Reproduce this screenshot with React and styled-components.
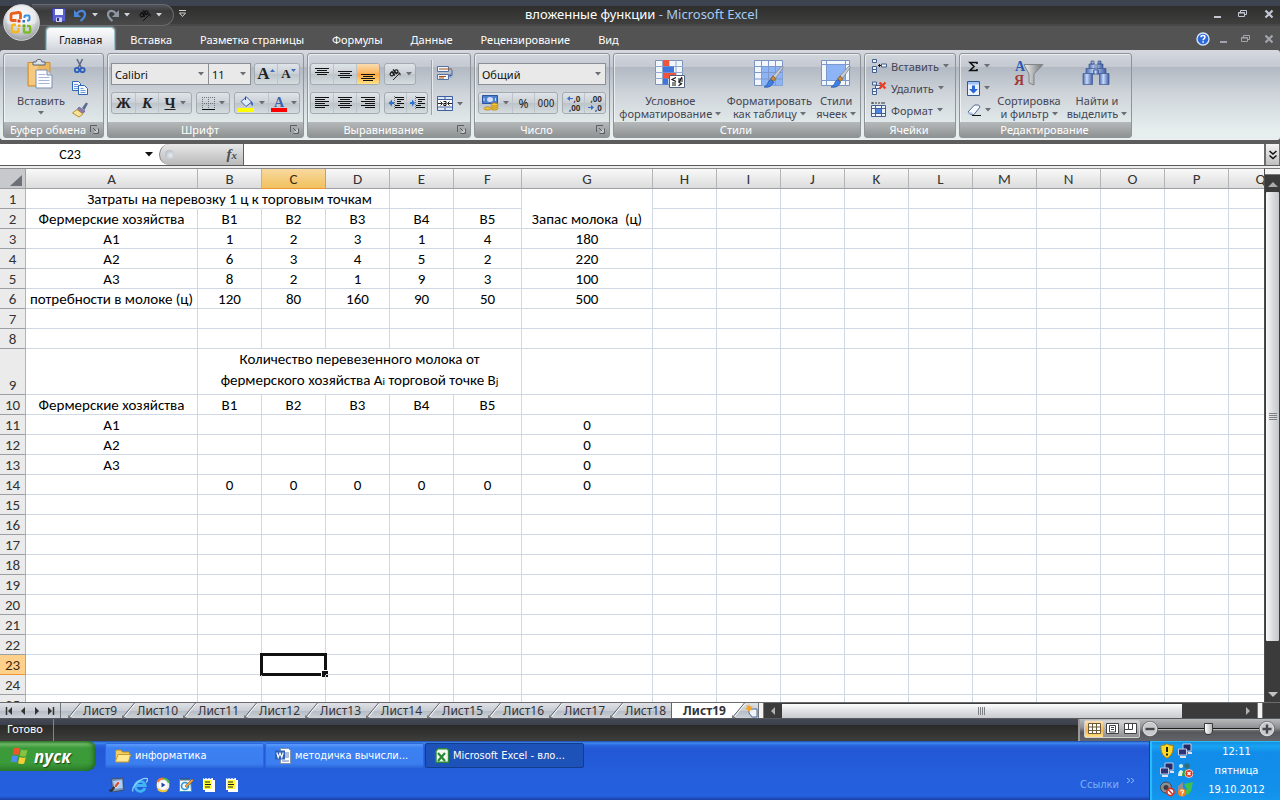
import React from "react";
import styled, { createGlobalStyle, css } from "styled-components";

const UI = '"Noto Sans", "Open Sans", sans-serif';
const CELL = 'Carlito, Lato, "Open Sans", sans-serif';
const TAHOMA = '"DejaVu Sans Condensed", "DejaVu Sans", sans-serif';

const Global = createGlobalStyle`
  * { box-sizing: border-box; }
  html, body { margin: 0; height: 100%; overflow: hidden; }
  body { font-family: ${UI}; font-size: 11px; color: #3b3b4b; }
  button, input, select { font: inherit; color: inherit; margin: 0; padding: 0; border: 0; background: none; border-radius: 0; outline: none; }
  svg { display: block; flex: none; }
  #root { height: 100%; }
`;

/* ---------- window ---------- */

const Window = styled.div`
  display: flex;
  flex-direction: column;
  height: 100vh;
  position: relative;
  background: #535353;
`;

const TitleBar = styled.header`
  flex: none;
  height: 27px;
  display: grid;
  grid-template-columns: 200px 1fr 200px;
  background: linear-gradient(#3e4350 0 6px, #2e2e2c 6px, #3f3f3f 24px, #484848 24px 26px, #535353 26px);
`;

const QuickAccess = styled.div`
  margin: 2px 0 0 32px;
  width: 142px;
  height: 22px;
  padding-left: 20px;
  display: flex;
  align-items: center;
  gap: 8px;
  border: 1px solid #66686c;
  border-left: 0;
  border-radius: 0 11px 11px 0;
  background: linear-gradient(#52545c, #3a3a3a 30%, #4a4a4a);
`;

const QuickRow = styled.div`
  display: flex;
  align-items: center;
`;

const Title = styled.h1`
  margin: 3px 0 0 3px;
  font-size: 13px;
  line-height: 22px;
  font-weight: 400;
  text-align: center;
  white-space: nowrap;
  color: #fff;
  span { color: #a6cbf5; }
`;

const WinButtons = styled.div`
  display: flex;
  justify-content: flex-end;
  align-items: center;
  gap: ${(p) => p.$gap || 14}px;
  padding-right: 6px;
  opacity: ${(p) => (p.$dim ? 0.7 : 1)};
`;

const PlainButton = styled.button`
  display: flex;
  align-items: center;
  gap: ${(p) => p.$gap || 0}px;
`;

const HelpButton = styled(PlainButton)`
  margin-right: 6px;
`;

const Orb = styled.button`
  position: absolute;
  left: 3px;
  top: 4px;
  width: 37px;
  height: 37px;
  z-index: 2;
`;

const TabBar = styled.nav`
  flex: none;
  height: 23px;
  padding: 1px 0 0 47px;
  display: flex;
  align-items: stretch;
  gap: 4px;
  background: #535353;
`;

const RibbonTab = styled.button`
  padding: 2px 12px 0;
  line-height: 20px;
  color: #fff;
  white-space: nowrap;
  ${(p) => p.$active && css`
    color: #111;
    border-radius: 3px 3px 0 0;
    background: linear-gradient(#fdfdfd, #e4e7ec 60%, #d2d6dc);
    box-shadow: 0 0 2px 1px #b9eaf0;
  `}
`;

const Spacer = styled.div`
  flex: 1;
`;

/* ---------- ribbon ---------- */

const Ribbon = styled.section`
  flex: none;
  height: 90px;
  padding: 3px 3px 1px;
  display: flex;
  gap: 3px;
  position: relative;
  border-radius: 3px;
  border-bottom: 1px solid #efefef;
  background: linear-gradient(#d5d9df, #c4c8d1 17px, #b3b9c3 17px, #cfd5da 45px, #e6eeee 80px);
`;

const Group = styled.fieldset`
  margin: 0;
  padding: 0;
  min-width: 0;
  flex: none;
  width: ${(p) => p.$w}px;
  display: flex;
  flex-direction: column;
  border: 1px solid #8f9498;
  border-radius: 3px;
  box-shadow: inset 1px 1px 0 rgba(255, 255, 255, 0.6);
`;

const GroupBody = styled.div`
  flex: 1;
  min-height: 0;
  display: flex;
  padding: ${(p) => p.$pad || "0 3px"};
  gap: ${(p) => p.$gap || 0}px;
`;

const GroupFooter = styled.div`
  height: 15px;
  display: flex;
  align-items: center;
  padding: 0 4px 0 2px;
  color: #fff;
  line-height: 15px;
  white-space: nowrap;
  background: linear-gradient(#b5b9ba, #8f9292);
  span { flex: 1; text-align: center; }
`;

const Stack = styled.div`
  display: flex;
  flex-direction: column;
  gap: ${(p) => p.$gap || 0}px;
  padding-top: ${(p) => p.$top || 0}px;
`;

const Row = styled.div`
  display: flex;
  align-items: center;
  gap: ${(p) => p.$gap || 0}px;
`;

const ButtonBox = styled.div`
  display: flex;
  height: 22px;
  border: 1px solid #a4abb1;
  border-radius: 3px;
  overflow: hidden;
  background: linear-gradient(#dfe4e8, #c9cfd5 50%, #bcc4ca 50%, #d5dde0);
`;

const ToolButton = styled.button`
  width: ${(p) => p.$w}px;
  display: flex;
  align-items: center;
  justify-content: center;
  gap: ${(p) => (p.$tight ? 0 : 4)}px;
  color: #222;
  font-size: 12px;
  ${(p) => p.$on && css`background: linear-gradient(#fbdcb0, #fbb763 45%, #ffa63f 50%, #ffe387);`}
  & + & { border-left: 1px solid #bcc4c9; }
`;

const Letter = styled.span`
  font-family: "Liberation Serif", serif;
  font-weight: 700;
  font-size: ${(p) => p.$size || 15}px;
  line-height: 18px;
  font-style: ${(p) => (p.$italic ? "italic" : "normal")};
  text-decoration: ${(p) => (p.$underline ? "underline" : "none")};
`;

const Narrow = styled.span`
  font-family: ${TAHOMA};
  font-size: 10px;
`;

const DecimalText = styled.span`
  display: flex;
  flex-direction: column;
  align-items: flex-end;
  font-size: 8px;
  line-height: 9px;
  font-weight: 700;
  color: #333;
  span { display: flex; align-items: center; gap: 1px; }
`;

const Combo = styled.label`
  position: relative;
  display: block;
  width: ${(p) => p.$w}px;
  height: 22px;
  & + & { margin-left: -1px; }
  select {
    appearance: none;
    width: 100%;
    height: 100%;
    padding-left: 3px;
    border: 1px solid #8b8f93;
    background: #e9e9e9;
    color: #111;
  }
  svg { position: absolute; right: 5px; top: 9px; }
`;

const Divider = styled.div`
  width: 2px;
  height: 55px;
  margin: 6px 4px 0 3px;
  border-left: 1px solid #9ba1a7;
  border-right: 1px solid #e6eaec;
`;

const BigButton = styled.button`
  width: ${(p) => p.$w}px;
  display: flex;
  flex-direction: column;
  align-items: center;
  padding-top: 5px;
  line-height: 13px;
  white-space: nowrap;
  color: #454554;
  svg.pic { margin-bottom: 5px; }
`;

const BigLine = styled.span`
  display: flex;
  align-items: center;
  gap: 3px;
  min-height: 12px;
`;

const SmallButton = styled.button`
  height: 22px;
  display: flex;
  align-items: center;
  gap: 4px;
  white-space: nowrap;
  color: #454554;
`;

/* ---------- formula bar ---------- */

const FormulaBar = styled.section`
  flex: none;
  display: flex;
  height: 26px;
  border-top: 4px solid #5c5c5c;
  border-bottom: 1px solid #5a5a5a;
  background: #fff;
  font-family: ${CELL};
  color: #000;
`;

const NameBox = styled.label`
  width: 159px;
  display: flex;
  align-items: center;
  input { width: 140px; text-align: center; font-size: 14px; line-height: 20px; }
`;

const FxZone = styled.div`
  width: 85px;
  display: flex;
  align-items: center;
  justify-content: space-between;
  padding: 0 6px 0 5px;
  border-right: 1px solid #606060;
  border-left: 1px solid #808080;
  border-radius: 11px 0 0 11px;
  background: linear-gradient(#e8e8e8, #b9b9b9);
`;

const Dimple = styled.i`
  width: 9px;
  height: 9px;
  border-radius: 50%;
  background: radial-gradient(circle at 60% 60%, #e9edf2, #a3abb8);
`;

const FxButton = styled.button`
  font-family: "Liberation Serif", serif;
  font-style: italic;
  font-weight: 700;
  font-size: 15px;
  line-height: 18px;
  color: #4b4f55;
  small { font-size: 11px; }
`;

const FormulaInput = styled.input`
  flex: 1;
  min-width: 0;
`;

const ExpandButton = styled.button`
  width: 16px;
  display: flex;
  align-items: center;
  justify-content: center;
  border: 1px solid #6c6c6c;
  border-width: 0 1px 0 2px;
  background: linear-gradient(#f4f4f4, #bfbfbf);
`;

/* ---------- grid ---------- */

const Work = styled.main`
  flex: 1;
  min-height: 0;
  display: flex;
  border-top: 2px solid #eeeeee;
  background: #fff;
`;

const SheetView = styled.div`
  flex: 1;
  min-width: 0;
  overflow: hidden;
  border-top: 1px solid #8d8d8d;
  border-right: 1px solid #4c4c4c;
`;

const Sheet = styled.table`
  table-layout: fixed;
  width: 1293px;
  border-collapse: separate;
  border-spacing: 0;
  font-family: ${CELL};
  font-size: 15px;
  line-height: 17px;
  color: #000;
`;

const HeadCell = styled.th`
  height: 20px;
  padding: 2px 0 0;
  font-weight: 400;
  color: #333;
  vertical-align: bottom;
  border-right: 1px solid #b1b3b6;
  border-bottom: 1px solid #9c9fa3;
  background: ${(p) => (p.$row ? "#ebebeb" : "linear-gradient(#f9f9f9, #dcdcdc)")};
  ${(p) => p.$on && css`
    color: #3c2a10;
    border-color: #f29536;
    background: ${p.$row ? "#ffd08a" : "linear-gradient(#f9d99f, #f1c15f)"};
  `}
`;

const Corner = styled.th`
  padding: 0;
  height: 20px;
  border-right: 1px solid #9c9fa3;
  border-bottom: 1px solid #9c9fa3;
  background: #c8c9cc;
  svg { margin: 3px 0 0 10px; }
`;

const Cell = styled.td`
  height: 20px;
  padding: 2px 0 0;
  text-align: center;
  vertical-align: bottom;
  white-space: nowrap;
  position: relative;
  border-right: 1px solid ${(p) => (p.$open ? "transparent" : "#d0d7e5")};
  border-bottom: 1px solid #d0d7e5;
  ${(p) => p.$tall && css`
    height: 46px;
    padding: 0;
    line-height: 21px;
    vertical-align: top;
  `}
  sub { font-size: 11px; line-height: 1px; vertical-align: baseline; }
`;

const Spill = styled.div`
  display: flex;
  justify-content: center;
`;

const Selection = styled.div`
  position: absolute;
  inset: -2px;
  border: 3px solid #111;
  &::after {
    content: "";
    position: absolute;
    right: -4px;
    bottom: -4px;
    width: 6px;
    height: 6px;
    background: #111;
    border-left: 1px solid #fff;
    border-top: 1px solid #fff;
  }
`;

const VScroll = styled.div`
  width: 15px;
  display: flex;
  flex-direction: column;
  align-items: center;
  background: #3b3b3b;
`;

const SplitHandle = styled.div`
  flex: none;
  ${(p) => p.$vertical
    ? css`width: 6px; height: 15px; border-width: 0 1px;`
    : css`width: 15px; height: 7px; border-width: 1px 0;`}
  border-style: solid;
  border-color: #777;
  background: #f2f2f2;
`;

const ScrollButton = styled.button`
  flex: none;
  width: ${(p) => p.$w || 15}px;
  height: ${(p) => p.$h || 17}px;
  display: flex;
  align-items: center;
  justify-content: center;
`;

const BarCorner = styled.div`
  width: 17px;
`;

const VThumb = styled.div`
  flex: 450 1 0;
  width: 13px;
  display: flex;
  align-items: center;
  justify-content: center;
  border-radius: 1px;
  background: linear-gradient(90deg, #fafafa, #dadce0 50%, #c3c5c9);
`;

const VTrack = styled.div`
  flex: 44 1 0;
`;

/* ---------- sheet tabs ---------- */

const SheetBar = styled.nav`
  flex: none;
  height: 17px;
  display: flex;
  border-top: 1px solid #6c6c6c;
  border-bottom: 1px solid #55585c;
  background: #3b3b3b;
`;

const TabArea = styled.div`
  flex: none;
  width: 764px;
  display: flex;
  background: linear-gradient(#dfe2e6, #c9cdd4 50%, #b4bac3 50%, #cdd2d8);
`;

const NavButtons = styled.div`
  width: 63px;
  display: flex;
  align-items: center;
  justify-content: space-between;
  padding: 0 5px;
  margin-right: 7px;
  border-right: 1px solid #70757c;
`;

const SheetTab = styled.button`
  flex: none;
  display: flex;
  align-items: stretch;
  gap: 2px;
  width: ${(p) => p.$w}px;
  font-size: 12px;
  line-height: 15px;
  color: #33343a;
  white-space: nowrap;
  ${(p) => p.$active && css`
    padding-left: 11px;
    font-weight: 700;
    background: #fff;
    border-left: 1px solid #666;
  `}
`;

const HScroll = styled.div`
  flex: 1;
  min-width: 0;
  display: flex;
  align-items: center;
`;

const HThumb = styled.div`
  flex: 400 1 0;
  height: 14px;
  display: flex;
  align-items: center;
  justify-content: center;
  background: linear-gradient(#fdfdfd, #e0e1e4 50%, #c9cbcf);
`;

const HTrack = styled.div`
  flex: 57 1 0;
`;

/* ---------- status bar ---------- */

const StatusBar = styled.footer`
  flex: none;
  height: 22px;
  display: flex;
  background: linear-gradient(#454956, #3c404b 6px, #2a2a28 6px, #3d3d3c);
`;

const StatusText = styled.div`
  width: 54px;
  padding-left: 7px;
  line-height: 20px;
  color: #fff;
  border-right: 1px solid #858585;
`;

const ViewZone = styled.div`
  display: flex;
  align-items: center;
  gap: 2px;
  width: 202px;
  padding: 0 5px 2px 4px;
  border-left: 2px solid #9a9a9a;
  background: linear-gradient(#b9babb, #8d8f92 40%, #55575b 60%, #63656a);
`;

const ViewButtons = styled.div`
  display: flex;
  height: 18px;
  border: 1px solid #d0d0d0;
  border-radius: 2px;
  background: linear-gradient(#d6d6d6, #8f9092);
`;

const ViewButton = styled.button`
  width: 18px;
  display: flex;
  align-items: center;
  justify-content: center;
  ${(p) => p.$on && css`background: linear-gradient(#fbe0b0, #f8b64e 60%, #ffdf8a);`}
`;

const Zoom = styled.input`
  flex: 1;
  min-width: 0;
  height: 16px;
  margin: 0 -2px;
  appearance: none;
  background: linear-gradient(transparent 7px, #1c1c1c 7px 8px, #b9b9b9 8px 9px, transparent 9px);
  &::-webkit-slider-thumb {
    appearance: none;
    width: 9px;
    height: 12px;
    border: 1px solid #3b3b3b;
    border-radius: 1px 1px 5px 5px;
    background: linear-gradient(90deg, #fff, #b9b9b9);
  }
`;

/* ---------- taskbar ---------- */

const Taskbar = styled.div`
  flex: none;
  height: 59px;
  display: flex;
  font-family: ${TAHOMA};
  color: #fff;
  background: linear-gradient(#1c46a8 0, #3f8cf0 2px, #2a68e0 4px, #2257d5 8px, #245edb 30px, #2560df 55px, #1941a5 59px);
`;

const StartButton = styled.button`
  width: 96px;
  height: 30px;
  margin-right: 9px;
  padding-left: 10px;
  display: flex;
  align-items: center;
  gap: 4px;
  font-family: "Open Sans", sans-serif;
  font-style: italic;
  font-weight: 700;
  font-size: 17px;
  color: #fff;
  text-shadow: 1px 1px 1px #1c4a16;
  border-radius: 0 8px 9px 0;
  background: linear-gradient(#2f7a2c, #6bb765 3px, #3c9a3a 7px, #3b9b38 22px, #2c7d2b);
  box-shadow: inset -4px 0 5px -2px #1f5f22;
`;

const TaskMain = styled.div`
  flex: 1;
  min-width: 0;
  display: flex;
  flex-direction: column;
  justify-content: space-between;
  padding: 2px 14px 7px 0;
`;

const QuickLaunch = styled.div`
  display: flex;
  align-items: center;
  gap: 7px;
  padding-left: 4px;
`;

const TaskButton = styled.button`
  width: 159px;
  height: 25px;
  padding: 0 14px 0 9px;
  display: flex;
  align-items: center;
  gap: 4px;
  border-radius: 2px;
  border: 1px solid ${(p) => (p.$on ? "#123c90" : "#2c69dd")};
  background: ${(p) => (p.$on ? "#1d52b8" : "linear-gradient(#5b9bfb, #3c81f3 4px, #3a7ef0 20px, #2f6be0)")};
  white-space: nowrap;
`;

const Links = styled.a`
  margin-left: auto;
  color: #7db2f3;
  line-height: 16px;
  text-decoration: none;
`;

const Tray = styled.div`
  width: 131px;
  display: flex;
  align-items: flex-start;
  padding: 2px 3px 0 9px;
  border-left: 1px solid #0d3d97;
  box-shadow: inset 2px 1px 1px #2bc0f8;
  background: linear-gradient(#1387df, #18a3f2 5px, #118ce8 12px, #1290ea 48px, #1497ee);
`;

const TrayIcons = styled.div`
  display: grid;
  grid-template-columns: 16px 16px;
  gap: 3px 2px;
`;

const Clock = styled.div`
  flex: 1;
  display: flex;
  flex-direction: column;
  text-align: center;
  line-height: 19px;
  margin: -1px 0 0 3px;
`;

/* ---------- icons ---------- */

const Arrow = ({ c = "#6b6f75" }) => (
  <svg width="6" height="4" viewBox="0 0 6 4"><path d="M0 0h6L3 3.6z" fill={c} /></svg>
);

const Launcher = () => (
  <svg width="9" height="9" viewBox="0 0 9 9" fill="none" stroke="#5b5f63">
    <path d="M.5 7V.5H7M3.500 8.500h5v-5" /><path d="M3 3l4 4M7 4.500V7H4.500" stroke="#fff" /><path d="M3 3l3.500 3.500" />
  </svg>
);

const OrbIcon = () => (
  <svg width="37" height="37" viewBox="0 0 37 37">
    <defs>
      <radialGradient id="orb" cx=".5" cy=".35" r=".65"><stop offset="0" stopColor="#fff" /><stop offset=".6" stopColor="#e6e8ea" /><stop offset="1" stopColor="#8c9095" /></radialGradient>
    </defs>
    <circle cx="18.500" cy="18.500" r="17.800" fill="url(#orb)" stroke="#d7dadd" />
    <path d="M2 19a16.500 16.500 0 0 0 33 0q-16 5-33 0z" fill="#aeb2b8" opacity=".35" />
    <g fill="none" strokeLinejoin="round">
      <path d="M13.500 16.500H9.500q-1.500 0-1.500-1.500v-4q0-1.500 1.500-1.700l6-.8q2-.2 2 1.500v5" stroke="#e8611c" strokeWidth="2.800" />
      <path d="M21.500 14v-1.500q0-1 1-1h3q1 0 1 1v3q0 1-1 1H24" stroke="#3c8fdc" strokeWidth="2" />
      <path d="M13 20.800h-2.500q-1.500 0-1.500 1.500v4.200q0 1.500 1.500 1.500H14q1.500 0 1.500-1.500V24" stroke="#f5b81c" strokeWidth="2.400" />
      <path d="M21 24v3.500q0 1 1 1h4q1.200 0 1.200-1.200v-4q0-1.300-1.200-1.300H24" stroke="#7dba28" strokeWidth="2.400" />
    </g>
    <path d="M14.500 15.500h3v3h-3z" fill="#e23c1c" /><path d="M19.500 16h2.500v2.500h-2.500z" fill="#2e6fc4" /><path d="M15 20.500h2.500V23H15z" fill="#f0a010" /><path d="M19.500 20.500h3v3h-3z" fill="#6aa820" />
  </svg>
);

const Save = () => (
  <svg width="14" height="14" viewBox="0 0 14 14"><path d="M.5.5h13v13h-12l-1-1z" fill="#5a5fd0" stroke="#3a3c96" /><path d="M3 1h8v6H3z" fill="#f4f6ff" /><path d="M4 9.500h6V14H4z" fill="#c9cef0" /><path d="M5 10h2v3H5z" fill="#2c2f7c" /></svg>
);

const Undo = ({ c = "#4a86dc", flip }) => (
  <svg width="13" height="14" viewBox="0 0 13 14"><g transform={flip ? "matrix(-1 0 0 1 13 0)" : undefined}><path d="M3 5.500C6 1.500 11 2 11 6.500c0 2.500-2 4.500-4.500 6.500" fill="none" stroke={c} strokeWidth="2.200" /><path d="M0 2v7h7z" fill={c} /></g></svg>
);

const RotText = ({ c = "#222" }) => (
  <svg width="14" height="14" viewBox="0 0 14 14" fill="none" stroke={c} strokeWidth="1.300"><ellipse cx="4" cy="7" rx="2" ry="1.700" transform="rotate(-45 4 7)" /><path d="M3.500 4.500l3.500 4M5 2.500l4 4.500" /><ellipse cx="8.200" cy="4.500" rx="1.800" ry="1.600" /><path d="M5 13l7-7M9.500 6H12v2.500" strokeWidth="1" /></svg>
);

const Minimize = () => <svg width="8" height="10" viewBox="0 0 8 10"><path d="M0 7h7v2H0z" fill="#c3c7d4" /></svg>;
const Restore = () => <svg width="10" height="10" viewBox="0 0 10 10" fill="none" stroke="#c3c7d4"><path d="M.5 3.500h6v4h-6zM2.500 3V1.500h6v4H7" /><path d="M.5 4h6" /></svg>;
const Close = () => <svg width="10" height="10" viewBox="0 0 10 10"><path d="M1.500 1.500l7 7M8.500 1.500l-7 7" stroke="#c3c7d4" strokeWidth="2.200" /></svg>;

const Help = () => (
  <svg width="14" height="14" viewBox="0 0 14 14"><circle cx="7" cy="7" r="6" fill="#2a67dc" stroke="#d6e4fb" strokeWidth="1.400" /><path d="M5 5.300C5 3 9 3 9 5.300 9 6.600 7.100 6.600 7.100 8.300" fill="none" stroke="#fff" strokeWidth="1.500" /><path d="M6.300 9.300h1.600v1.500H6.300z" fill="#fff" /></svg>
);

const Paste = () => (
  <svg className="pic" width="30" height="30" viewBox="0 0 30 30"><path d="M2 3.500h22V27H2z" fill="#edb75f" stroke="#c98f35" /><path d="M3 4h9v22H3z" fill="#f5ca80" /><path d="M7 6V3h3c0-3.500 6-3.500 6 0h3v3z" fill="#dde2e8" stroke="#596472" /><path d="M10 11h11l5 5v13H10z" fill="#fafcff" stroke="#7f8fb0" /><path d="M21 11v5h5" fill="#cfdcf2" stroke="#7f8fb0" /><path d="M12.500 15.500h7M12.500 18.500h11M12.500 21.500h11M12.500 24.500h11" stroke="#a7b6d6" /></svg>
);
const Cut = () => (
  <svg width="16" height="16" viewBox="0 0 16 16" fill="none"><path d="M5 1l4.500 9M10.500 1L6 10" stroke="#5b6b85" strokeWidth="1.600" /><circle cx="5" cy="12" r="2.200" stroke="#2c5fbe" strokeWidth="1.800" /><circle cx="10.500" cy="12" r="2.200" stroke="#2c5fbe" strokeWidth="1.800" /></svg>
);
const Copy = () => (
  <svg width="16" height="14" viewBox="0 0 16 14" fill="#f3f8ff" stroke="#2d64b5"><path d="M.5.5h6l2 2v7h-8z" /><path d="M6.500 4.500h6l3 3v6h-9z" /><path d="M2 3.500h4M2 5.500h4M2 7.500h4M8.500 7.500h3M8.500 9.500h5M8.500 11.500h5" stroke="#6a9ae0" /></svg>
);
const Brush = () => (
  <svg width="16" height="16" viewBox="0 0 16 16"><path d="M10 6l4-5.500 2 1-3.500 6.500z" fill="#5d6b8a" /><path d="M7 5l6 4-2 2.500-6-4z" fill="#8c7ab5" stroke="#5a5380" strokeWidth=".6" /><path d="M5 7.500l6 4.500-4 3-6.500-4z" fill="#f5e19a" stroke="#b8912e" /></svg>
);

const BorderGrid = () => (
  <svg width="13" height="13" viewBox="0 0 13 13" stroke="#6e7378" fill="none"><path d="M.5 0v12M6.500 0v12M12.500 0v12M0 .5h13M0 6.500h13" strokeDasharray="1 1" /><path d="M0 12.500h13" stroke="#111" /></svg>
);
const Bucket = () => (
  <svg width="17" height="17" viewBox="0 0 17 17"><path d="M3 6.500L8.500 2l5 5-5.500 4.500z" fill="#dfe9fa" stroke="#3c5fa8" /><path d="M7.500 5V1.500" stroke="#444" /><path d="M13 6c2 1 2.500 3 1.500 5-1.500-1-2-2.500-1.500-5z" fill="#2f66c2" /><path d="M0 13h16v4H0z" fill="#ff0" /></svg>
);
const Bars = ({ rows }) => (
  <svg width="14" height="14" viewBox="0 0 14 14">{rows.map(([x, y, l]) => <path key={y} d={`M${x} ${y}.5h${l}`} stroke="#111" />)}</svg>
);
const Indent = ({ right }) => (
  <svg width="16" height="14" viewBox="0 0 16 14"><path d="M7 1.500h9M9 3.500h7M9 5.500h4M9 7.500h7M7 9.500h5M7 11.500h9" stroke="#111" /><path d="M6.500 0v13" stroke="#777" strokeDasharray="1 1" /><path d={right ? "M1 6h2V3.500L6 7l-3 3.500V8H1z" : "M6 6H4V3.500L.5 7 4 10.500V8h2z"} fill="#2f6fd0" /></svg>
);
const Wrap = () => (
  <svg width="17" height="16" viewBox="0 0 17 16" fill="none"><path d="M.5.500h11v5H.5zM.5 8.500h11v5H.5z" fill="#f3f7fd" stroke="#56709e" /><path d="M2 3h13" stroke="#a2541e" /><path d="M2 10.500h7M2 12h5" stroke="#a2541e" /><path d="M15 4v5.500h-2.500M14 7.500l-2 2 2 2" stroke="#3b62ae" /></svg>
);
const Merge = () => (
  <svg width="16" height="15" viewBox="0 0 16 15"><path d="M.5.500h15v14H.5z" fill="#dfe8f7" stroke="#3f5f9e" /><path d="M8 0v3M8 12v3" stroke="#3f5f9e" /><path d="M.5 3.500h15v7.500H.5z" fill="#fff" stroke="#3f5f9e" /><path d="M1 7.500h4M11 7.500h4M3.500 5.500l2 2-2 2M12.500 5.500l-2 2 2 2" stroke="#222" fill="none" /><path d="M6.500 5.500h2.500v4H6.800v-2H9" fill="none" stroke="#111" /></svg>
);
const Money = () => (
  <svg width="17" height="16" viewBox="0 0 17 16"><path d="M.5.500h15v8H.5z" fill="#4f7fd0" stroke="#2c559e" /><ellipse cx="8" cy="4.500" rx="3" ry="2.500" fill="#cfe0fa" /><path d="M2 3v3M13.500 3v3" stroke="#cfe0fa" /><g fill="#f4c63c" stroke="#a87a12" strokeWidth=".7"><ellipse cx="12.500" cy="13.500" rx="3.500" ry="1.600" /><ellipse cx="12.500" cy="11.500" rx="3.500" ry="1.600" /><ellipse cx="12.500" cy="9.500" rx="3.500" ry="1.600" /><ellipse cx="5.500" cy="13.500" rx="3.500" ry="1.600" /></g></svg>
);
const BlueArrow = ({ right }) => (
  <svg width="6" height="5" viewBox="0 0 6 5"><path d={right ? "M0 2h3V0l3 2.500L3 5V3H0z" : "M6 2H3V0L0 2.500 3 5V3h3z"} fill="#2f6fd0" /></svg>
);

const CondFmt = () => (
  <svg className="pic" width="30" height="30" viewBox="0 0 30 30"><path d="M.5 1.500h27v24H.5z" fill="#f2f6fd" stroke="#7c93bd" /><path d="M7.500 1v24M14 1v24M21 1v24M0 7.500h28M0 13.500h28M0 19.500h28" stroke="#93a8cf" /><path d="M8 1h6v6H8zM8 14h13v5.500H8z" fill="#f0553c" /><path d="M8 7.500h11v6H8zM8 19.500h5v6H8z" fill="#3f76de" /><path d="M14.500 16.500h15v12h-15z" fill="#fff" stroke="#51607c" /><path d="M21 18.500l-4 2 4 2M17 24h4M17 26h4M23 20h5M23 22h5M27 18l-3 5M23.500 23l3 1.700-3 2" fill="none" stroke="#111" strokeWidth="1.200" /></svg>
);
const BrushBig = () => (<g><path d="M29.500 8l-8 11.500-3-2L28 7z" fill="#c9ced6" stroke="#7d8590" strokeWidth=".8" /><path d="M19 17l3 2.500-2.500 3-3-2.500z" fill="#c7893a" stroke="#8a5a1c" strokeWidth=".8" /><path d="M10 28c4-1 3-5 6.500-7.500l3 2.500c-1 4-5 6-9.500 5z" fill="#3f7fe0" stroke="#2a58ac" strokeWidth=".8" /></g>);
const FmtTable = () => (
  <svg className="pic" width="30" height="30" viewBox="0 0 30 30"><path d="M.5 1.500h28v25H.5z" fill="#f2f6fd" stroke="#7c93bd" /><path d="M8 7.500h20.500v19H8z" fill="#8db4f4" /><path d="M7.500 1v25.500M14.500 1v25.500M21.500 1v25.500M0 7.500h29M0 13.500h29M0 20h29" stroke="#7c98cc" /><BrushBig /></svg>
);
const CellStyles = () => (
  <svg className="pic" width="30" height="30" viewBox="0 0 30 30"><path d="M.5 1.500h28v25H.5z" fill="#f2f6fd" stroke="#7c93bd" /><path d="M5.500 5.500h19v16h-19z" fill="#8db4f4" /><path d="M5.500 1v25.500M24.500 1v25.500M0 5.500h29M0 21.500h29" stroke="#7c98cc" /><BrushBig /></svg>
);
const CellIns = () => (
  <svg width="16" height="15" viewBox="0 0 16 15" fill="#eef4fd" stroke="#44608f"><path d="M1.500.500h4v3h-4zM1.500 10.500h4v3h-4zM1.500 7.500h4v3h-4zM10.500 5h5v3h-5z" /><path d="M10 6.500H7M8.500 5v3" stroke="#111" /></svg>
);
const CellDel = () => (
  <svg width="16" height="15" viewBox="0 0 16 15" fill="#eef4fd" stroke="#44608f"><path d="M1.500 1h4v3h-4zM1.500 10.500h4v3h-4zM1.500 7.500h4v3h-4zM4.500 4.500h5v3h-5z" /><path d="M8.500 1.500l6 6M14.500 1.500l-6 6" stroke="#ee3b1e" strokeWidth="2.200" /></svg>
);
const CellFmt = () => (
  <svg width="16" height="16" viewBox="0 0 16 16" fill="#eef4fd" stroke="#44608f"><path d="M.5 3.500h14v11H.5z" /><path d="M4.500 3v12M10.500 3v12M0 6.500h15M0 11.500h15" /><path d="M5 7h5v4H5z" fill="#4c86e8" stroke="none" /><path d="M1 1h12M1 0v2M13 0v2" stroke="#333" strokeDasharray="2 1" /></svg>
);
const FillDown = () => (
  <svg width="13" height="15" viewBox="0 0 13 15"><path d="M.5.500h12v14H.5z" fill="#eaf1fc" stroke="#33588f" /><path d="M1 1h11v2.500H1z" fill="#9fc0f2" /><path d="M5 4.500h3V8h3l-4.500 4.500L2 8h3z" fill="#2866d8" /></svg>
);
const Eraser = () => (
  <svg width="14" height="12" viewBox="0 0 14 12"><path d="M1 8L7.500 1h4L13 3l-6 7.500H3z" fill="#f5f8fe" stroke="#55688c" /><path d="M1 8l4 .5L6.500 10.500H3z" fill="#a8bfe8" /><path d="M5 11.500h9" stroke="#111" /></svg>
);
const Binoculars = () => (
  <svg className="pic" width="30" height="30" viewBox="0 0 30 30"><defs><linearGradient id="bin"><stop offset="0" stopColor="#4a6cb4" /><stop offset=".4" stopColor="#c9dafa" /><stop offset="1" stopColor="#3c5ca4" /></linearGradient></defs><g fill="url(#bin)" stroke="#3d5890" strokeWidth=".7"><path d="M9 2h3v3H9zM16 2h3v3h-3zM7 5h6v5H7zM15 5h6v5h-6z" /><path d="M4 9.500h9V15H4zM15 9.500h9V15h-9z" /><path d="M11.500 11h5v4h-5z" /><path d="M1 14.500h9.500v11H1z" /><path d="M17.500 14.500H27v11h-9.500z" /></g></svg>
);
const SortLetters = () => (
  <svg className="pic" width="30" height="30" viewBox="0 0 30 30"><defs><linearGradient id="fun"><stop offset="0" stopColor="#f2f2f2" /><stop offset="1" stopColor="#6e7276" /></linearGradient></defs><path d="M10 5.500h19L20 15v11l-5-2V15z" fill="url(#fun)" stroke="#82868a" /><text x="1" y="12" fontFamily="Liberation Serif" fontWeight="700" fontSize="14" fill="#2d58b0">А</text><text x="0" y="26" fontFamily="Liberation Serif" fontWeight="700" fontSize="14" fill="#a03a38">Я</text></svg>
);
const FontColor = () => (
  <svg width="16" height="17" viewBox="0 0 16 17"><text x="8" y="12" textAnchor="middle" fontFamily="Liberation Serif" fontWeight="700" fontSize="14" fill="#3f62a8">A</text><path d="M0 13h16v4H0z" fill="#f00" /></svg>
);
const SizeMark = ({ down }) => (
  <svg width="5" height="13" viewBox="0 0 5 13"><path d={down ? "M0 1h5L2.500 4z" : "M0 4h5L2.500 1z"} fill="#3f6ec0" /></svg>
);

const Tri = ({ dir, c = "#333", bar }) => {
  const d = { left: "M7 0v8L3 4z", right: "M3 0v8l4-4z", up: "M0 7h10L5 2z", down: "M0 2h10L5 7z" }[dir];
  return <svg width="10" height="8" viewBox="0 0 10 8"><path d={d} fill={c} />{bar && <path d={dir === "left" ? "M1.500 0v8" : "M8.500 0v8"} stroke={c} strokeWidth="1.500" />}</svg>;
};
const Grip = ({ vertical }) => (
  <svg width="8" height="8" viewBox="0 0 8 8"><path d={vertical ? "M0 .5h8M0 2.500h8M0 4.500h8M0 6.500h8" : "M.5 0v8M2.500 0v8M4.500 0v8M6.500 0v8"} stroke="#7c7f84" /></svg>
);
const Slash = ({ end }) => (
  <svg width="13" height="15" viewBox="0 0 13 15">{end && <path d="M0 0h12L0 15z" fill="#fff" />}<path d="M1.500 15L13.500 0" stroke="#fff" /><path d="M0 15L12.500 0" stroke="#5f646b" /><path d="M0 12v3h4z" fill="#777b80" /></svg>
);
const NewSheet = () => (
  <svg width="13" height="14" viewBox="0 0 13 14"><path d="M4 5h8v8H7L4 9z" fill="#f0f3f8" stroke="#4d6a9a" /><path d="M4 0l1 2.500L8 2 6 4l1.500 2.500L4.500 6 3 8 2.500 5.500 0 5l2-1.500L1.500 1 3.500 2z" fill="#f4a428" /></svg>
);

const ViewIcon = ({ kind }) => (
  <svg width="13" height="12" viewBox="0 0 13 12" fill="#fff" stroke={kind === "grid" ? "#6b5a3a" : "#3f4145"}>
    <path d="M.5.500h12v10H.5z" />
    {kind === "grid" && <path d="M4.500 0v11M8.500 0v11M0 4h13M0 7.500h13" />}
    {kind === "page" && <path d="M3.500 2.500h6v6.500h-6zM5 4.500h3M5 6.500h3" />}
    {kind === "break" && <path d="M4.500 0v6.500h-4M8.500 0v6.500h-4" />}
  </svg>
);
const ZoomSign = ({ plus }) => (
  <svg width="16" height="16" viewBox="0 0 16 16"><circle cx="8" cy="8" r="7" fill="#c9cacc" stroke="#f0f0f0" /><circle cx="8" cy="8" r="7.700" fill="none" stroke="#4c4e52" strokeWidth=".6" /><path d={plus ? "M3.500 8h9M8 3.500v9" : "M3.500 8h9"} stroke="#44474c" strokeWidth="2.400" /></svg>
);

const XpFlag = () => (
  <svg width="20" height="18" viewBox="0 0 20 18"><path d="M4 1.500q3-1.500 6 .2L8.500 8q-3-1.600-6-.2z" fill="#f0562a" /><path d="M11 2.500q3 1.500 6.500.2L16 9q-3 1.200-6.300-.2z" fill="#86c440" /><path d="M2 9q3-1.300 6 .2l-1.500 6.300q-3-1.600-6-.2z" fill="#4c8df0" /><path d="M9.500 10q3 1.400 6.300.2l-1.600 6.300q-3 1.200-6.200-.2z" fill="#f8cc34" /></svg>
);
const Folder = () => (
  <svg width="16" height="14" viewBox="0 0 16 14"><path d="M.5 12.500V2l1-1H6l1.500 2h7v3" fill="#f3cf62" stroke="#b88a20" /><path d="M.5 12.500L3 5.500h12.500l-2 7.500H1z" fill="#ffe892" stroke="#c79a2c" /></svg>
);
const WordIcon = () => (
  <svg width="16" height="16" viewBox="0 0 16 16"><path d="M5.500.500h8l2 2v13h-10z" fill="#fff" stroke="#8592a8" /><path d="M10 5h4M10 7h4M10 9h4M7 13h7" stroke="#5c7fc0" /><path d="M0 2.500h10v9H0z" fill="#2f5fb8" /><path d="M1.800 4.500L3.200 9.500 5 5l1.800 4.500 1.400-5" fill="none" stroke="#fff" strokeWidth="1.200" /></svg>
);
const ExcelIcon = () => (
  <svg width="14" height="15" viewBox="0 0 14 15"><path d="M3 .7h9l1.500 1.500v12H1V3z" fill="#f2faf2" stroke="#2c8a3c" strokeWidth="1.400" /><path d="M3 5l7 8M10 5l-7 8" stroke="#2a8a34" strokeWidth="2.200" /></svg>
);
const DesktopIcon = () => (
  <svg width="16" height="16" viewBox="0 0 16 16"><path d="M2 2l12-1 1 12-11 2z" fill="#7a93b8" stroke="#3e4f6b" /><path d="M4 4l9-1 .5 8L6 12z" fill="#a9d0f5" /><path d="M0 13l2 1 7-8" fill="none" stroke="#333" strokeWidth="2" /><path d="M5 9l4-5 2 2-4 5z" fill="#d9483a" stroke="#fff" strokeWidth=".6" /></svg>
);
const IeIcon = () => (
  <svg width="16" height="16" viewBox="0 0 16 16" fill="none"><path d="M13 11A5 5 0 1 1 13.200 8.500H4" stroke="#42b4f4" strokeWidth="2.800" /><path d="M1 14.500C-1 10 9 0 15 1.500c1 1 0 3-1 4" stroke="#8fd6fb" strokeWidth="1.200" /></svg>
);
const MediaIcon = () => (
  <svg width="16" height="16" viewBox="0 0 16 16"><circle cx="8" cy="8" r="7" fill="#e8eef6" stroke="#3c57a6" /><path d="M2.500 5A6.500 6.500 0 0 1 8 1.500" stroke="#f4762a" strokeWidth="2.200" fill="none" /><path d="M8 1.500A6.500 6.500 0 0 1 14 6" stroke="#57b846" strokeWidth="2.200" fill="none" /><path d="M3 12a6.500 6.500 0 0 0 9 1" stroke="#f5c533" strokeWidth="2" fill="none" /><circle cx="8" cy="8" r="4" fill="#fff" /><path d="M6.500 5.500v5l4-2.500z" fill="#2443a4" /></svg>
);
const NotepadIcon = () => (
  <svg width="16" height="16" viewBox="0 0 16 16"><path d="M1.500 2.500h11l1 12h-12z" fill="#f2fbff" stroke="#3c8fc4" /><circle cx="7" cy="9" r="3.500" fill="none" stroke="#2b93d6" strokeWidth="1.600" /><path d="M7 9l7-7 1.500 1.500-7 7z" fill="#f0a43c" stroke="#8a4c18" strokeWidth=".6" /><path d="M3 1v3M5 1v3M7 1v3M9 1v3M11 1v3" stroke="#444" strokeWidth=".8" /></svg>
);
const NoteIcon = () => (
  <svg width="16" height="16" viewBox="0 0 16 16"><path d="M2 1l1.500 1L5 1l1.500 1L8 1l1.500 1L11 1h1v2h2v12H4v-2H2z" fill="#fff" /><path d="M3 3h8v9H3z" fill="#ff3" /><path d="M4 5h5M4 7.500h6M4 10h5" stroke="#222" strokeWidth="1.200" /></svg>
);

const Shield = () => (<svg width="16" height="16" viewBox="0 0 16 16"><path d="M8 .7c2 1.500 4 1.800 6 1.500.5 6-1 10.500-6 13-5-2.500-6.500-7-6-13 2 .3 4 0 6-1.500z" fill="#fbd728" stroke="#a97c10" /><path d="M7 4h2v5H7zM7 10.500h2v2H7z" fill="#222" /></svg>);
const NetIcon = () => (<svg width="16" height="16" viewBox="0 0 16 16" stroke="#c3cbe6"><path d="M6 1h8v7H6z" fill="#232a63" /><path d="M1.500 6h8v6h-8z" fill="#2b3474" /><path d="M3 14h6M11 10h4" stroke="#dde2f2" strokeWidth="2" /></svg>);
const Messenger = () => (<svg width="16" height="16" viewBox="0 0 16 16"><circle cx="4" cy="4" r="2" fill="#dff2e4" /><path d="M1 14c0-8 6-8 6 0z" fill="#dff2e4" /><circle cx="10" cy="4" r="2.800" fill="#2d6f7c" /><path d="M5 14c0-9 10-9 10 0z" fill="#3d9c4c" /><circle cx="12" cy="11.500" r="4" fill="#e23220" stroke="#fff" strokeWidth=".7" /><path d="M10.500 10l3 3M13.500 10l-3 3" stroke="#fff" strokeWidth="1.400" /></svg>);
const Speaker = () => (<svg width="16" height="16" viewBox="0 0 16 16"><circle cx="7" cy="6.500" r="5.500" fill="#8d8f94" stroke="#45474c" /><circle cx="7" cy="6.500" r="2.500" fill="#3a3c40" /><circle cx="11.500" cy="11" r="3.600" fill="#fff" stroke="#d8301e" strokeWidth="1.600" /><path d="M9 8.500l5 5" stroke="#d8301e" strokeWidth="1.500" /></svg>);
const Safely = () => (<svg width="16" height="16" viewBox="0 0 16 16"><path d="M1 5l5-4v10l-5 2z" fill="#8c8f94" /><path d="M7 3l9-2-2 9-3 4-4-2 3-4z" fill="#3fc14c" /><circle cx="5" cy="11.500" r="4" fill="#f08020" /><path d="M3.700 10.500c0-2 2.800-2 2.800 0 0 1-1.400 1-1.400 2.300M5 13.500v1" stroke="#fff" strokeWidth="1.200" fill="none" /></svg>);

/* ---------- data ---------- */

const ribbonTabs = ["Главная", "Вставка", "Разметка страницы", "Формулы", "Данные", "Рецензирование", "Вид"];

const columns = [
  ["A", 172], ["B", 64], ["C", 64], ["D", 64], ["E", 64], ["F", 68], ["G", 131],
  ["H", 64], ["I", 64], ["J", 64], ["K", 64], ["L", 64], ["M", 64], ["N", 64], ["O", 64], ["P", 64], ["Q", 64],
];

const values = {
  1: { B: "Затраты на перевозку 1 ц к торговым точкам", G: "Запас молока\u00a0 (ц)" },
  2: { A: "Фермерские хозяйства", B: "B1", C: "B2", D: "B3", E: "B4", F: "B5" },
  3: { A: "A1", B: "1", C: "2", D: "3", E: "1", F: "4", G: "180" },
  4: { A: "A2", B: "6", C: "3", D: "4", E: "5", F: "2", G: "220" },
  5: { A: "A3", B: "8", C: "2", D: "1", E: "9", F: "3", G: "100" },
  6: { A: "потребности в молоке (ц)", B: "120", C: "80", D: "160", E: "90", F: "50", G: "500" },
  9: { B: <>Количество перевезенного молока от<br />фермерского хозяйства A<sub>i</sub> торговой точке B<sub>j</sub></> },
  10: { A: "Фермерские хозяйства", B: "B1", C: "B2", D: "B3", E: "B4", F: "B5" },
  11: { A: "A1", G: "0" },
  12: { A: "A2", G: "0" },
  13: { A: "A3", G: "0" },
  14: { B: "0", C: "0", D: "0", E: "0", F: "0", G: "0" },
};

const rowNumbers = Array.from({ length: 25 }, (_, i) => i + 1);
const spans = { "1G": { rowSpan: 2 }, "9B": { colSpan: 5 } };
const covered = new Set(["2G", "9C", "9D", "9E", "9F"]);
const openRight = new Set(["1A", "1B", "1C"]);

const sheetTabs = ["Лист9", "Лист10", "Лист11", "Лист12", "Лист13", "Лист14", "Лист15", "Лист16", "Лист17", "Лист18"];

/* ---------- parts ---------- */

const WindowControls = ({ gap, dim }) => (
  <WinButtons $gap={gap} $dim={dim}>
    <PlainButton aria-label="Свернуть"><Minimize /></PlainButton>
    <PlainButton aria-label="Восстановить"><Restore /></PlainButton>
    <PlainButton aria-label="Закрыть"><Close /></PlainButton>
  </WinButtons>
);

const RibbonGroup = ({ title, w, launcher, children, pad, gap }) => (
  <Group $w={w} aria-label={title}>
    <GroupBody $pad={pad} $gap={gap}>{children}</GroupBody>
    <GroupFooter><span>{title}</span>{launcher && <PlainButton aria-label={`${title}: параметры`}><Launcher /></PlainButton>}</GroupFooter>
  </Group>
);

const Choice = ({ label, value, w }) => (
  <Combo $w={w}>
    <select aria-label={label} defaultValue={value}><option>{value}</option></select>
    <Arrow />
  </Combo>
);

const Grid = () => (
  <Sheet>
    <colgroup>
      <col style={{ width: 26 }} />
      {columns.map(([name, width]) => <col key={name} style={{ width }} />)}
    </colgroup>
    <thead>
      <tr>
        <Corner aria-label="Выделить все"><svg width="12" height="11" viewBox="0 0 12 11"><path d="M12 0v11H0z" fill="#6d7075" /></svg></Corner>
        {columns.map(([name]) => <HeadCell key={name} $on={name === "C"}>{name}</HeadCell>)}
      </tr>
    </thead>
    <tbody>
      {rowNumbers.map((n) => (
        <tr key={n}>
          <HeadCell $row $on={n === 23}>{n}</HeadCell>
          {columns.map(([name]) => {
            const key = `${n}${name}`;
            if (covered.has(key)) return null;
            const content = values[n] && values[n][name];
            return (
              <Cell key={key} {...spans[key]} $tall={n === 9} $open={openRight.has(key)}>
                {key === "1B" ? <Spill>{content}</Spill> : content}
                {key === "23C" && <Selection />}
              </Cell>
            );
          })}
        </tr>
      ))}
    </tbody>
  </Sheet>
);

export default function App() {
  return (
    <>
      <Global />
      <Window>
        <Orb aria-label="Кнопка Office"><OrbIcon /></Orb>
        <TitleBar>
          <QuickRow>
            <QuickAccess>
              <PlainButton aria-label="Сохранить"><Save /></PlainButton>
              <PlainButton $gap={5} aria-label="Отменить"><Undo /><Arrow c="#d0d3d8" /></PlainButton>
              <PlainButton $gap={5} aria-label="Вернуть"><Undo c="#8d97a3" flip /><Arrow c="#d0d3d8" /></PlainButton>
              <PlainButton $gap={4} aria-label="Ориентация"><RotText c="#111" /><Arrow c="#d0d3d8" /></PlainButton>
            </QuickAccess>
            <PlainButton aria-label="Настройка панели"><svg width="18" height="8" viewBox="0 0 18 8"><path d="M5 .5h7M5.500 3h6l-3 3.500z" stroke="#d0d3d8" fill="none" /></svg></PlainButton>
          </QuickRow>
          <Title>вложенные функции <span>- Microsoft Excel</span></Title>
          <WindowControls gap={16} />
        </TitleBar>

        <TabBar>
          {ribbonTabs.map((t, i) => <RibbonTab key={t} $active={i === 0}>{t}</RibbonTab>)}
          <Spacer />
          <HelpButton aria-label="Справка"><Help /></HelpButton>
          <WindowControls gap={13} dim />
        </TabBar>

        <Ribbon>
          <RibbonGroup title="Буфер обмена" w={101} launcher pad="0 6px 0 9px" gap={3}>
            <BigButton $w={56}><Paste /><span>Вставить</span><BigLine><Arrow /></BigLine></BigButton>
            <Stack $top={4} $gap={7}>
              <PlainButton aria-label="Вырезать"><Cut /></PlainButton>
              <PlainButton aria-label="Копировать"><Copy /></PlainButton>
              <PlainButton aria-label="Формат по образцу"><Brush /></PlainButton>
            </Stack>
          </RibbonGroup>

          <RibbonGroup title="Шрифт" w={197} launcher>
            <Stack $top={9} $gap={7}>
              <Row $gap={3}>
                <Row>
                  <Choice label="Шрифт" value="Calibri" w={98} />
                  <Choice label="Размер" value="11" w={43} />
                </Row>
                <ButtonBox>
                  <ToolButton $tight $w={22} aria-label="Увеличить размер"><Letter $size={17}>A</Letter><SizeMark /></ToolButton>
                  <ToolButton $tight $w={22} aria-label="Уменьшить размер"><Letter $size={13}>A</Letter><SizeMark down /></ToolButton>
                </ButtonBox>
              </Row>
              <Row $gap={4}>
                <ButtonBox>
                  <ToolButton $w={23}><Letter>Ж</Letter></ToolButton>
                  <ToolButton $w={23}><Letter $italic>К</Letter></ToolButton>
                  <ToolButton $w={33}><Letter $underline>Ч</Letter><Arrow /></ToolButton>
                </ButtonBox>
                <ButtonBox><ToolButton $w={32} aria-label="Границы"><BorderGrid /><Arrow /></ToolButton></ButtonBox>
                <ButtonBox>
                  <ToolButton $w={33} aria-label="Цвет заливки"><Bucket /><Arrow /></ToolButton>
                  <ToolButton $w={31} aria-label="Цвет текста"><FontColor /><Arrow /></ToolButton>
                </ButtonBox>
              </Row>
            </Stack>
          </RibbonGroup>

          <RibbonGroup title="Выравнивание" w={164} launcher pad="0 2px">
            <Stack $top={9} $gap={7}>
              <Row $gap={4}>
                <ButtonBox>
                  <ToolButton $w={22} aria-label="По верхнему краю"><Bars rows={[[0, 1, 14], [2, 3, 10], [0, 5, 14], [2, 7, 10]]} /></ToolButton>
                  <ToolButton $w={23} aria-label="По середине"><Bars rows={[[0, 4, 14], [2, 6, 10], [0, 8, 14], [2, 10, 10]]} /></ToolButton>
                  <ToolButton $w={23} $on aria-label="По нижнему краю"><Bars rows={[[0, 7, 14], [2, 9, 10], [0, 11, 14], [2, 13, 10]]} /></ToolButton>
                </ButtonBox>
                <ButtonBox><ToolButton $w={30} aria-label="Ориентация"><RotText /><Arrow /></ToolButton></ButtonBox>
              </Row>
              <Row $gap={4}>
                <ButtonBox>
                  <ToolButton $w={22} aria-label="По левому краю"><Bars rows={[[0, 1, 14], [0, 3, 10], [0, 5, 14], [0, 7, 10], [0, 9, 14], [0, 11, 10]]} /></ToolButton>
                  <ToolButton $w={23} aria-label="По центру"><Bars rows={[[0, 1, 14], [2, 3, 10], [0, 5, 14], [2, 7, 10], [0, 9, 14], [2, 11, 10]]} /></ToolButton>
                  <ToolButton $w={23} aria-label="По правому краю"><Bars rows={[[0, 1, 14], [4, 3, 10], [0, 5, 14], [4, 7, 10], [0, 9, 14], [4, 11, 10]]} /></ToolButton>
                </ButtonBox>
                <ButtonBox>
                  <ToolButton $w={21} aria-label="Уменьшить отступ"><Indent /></ToolButton>
                  <ToolButton $w={21} aria-label="Увеличить отступ"><Indent right /></ToolButton>
                </ButtonBox>
              </Row>
            </Stack>
            <Divider />
            <Stack $top={12} $gap={14}>
              <PlainButton aria-label="Перенос текста"><Wrap /></PlainButton>
              <PlainButton $gap={4} aria-label="Объединить ячейки"><Merge /><Arrow /></PlainButton>
            </Stack>
          </RibbonGroup>

          <RibbonGroup title="Число" w={136} launcher>
            <Stack $top={9} $gap={7}>
              <Choice label="Числовой формат" value="Общий" w={128} />
              <Row $gap={4}>
                <ButtonBox>
                  <ToolButton $w={33} aria-label="Финансовый формат"><Money /><Arrow /></ToolButton>
                  <ToolButton $w={22}>%</ToolButton>
                  <ToolButton $w={23}><Narrow>000</Narrow></ToolButton>
                </ButtonBox>
                <ButtonBox>
                  <ToolButton $w={21} aria-label="Увеличить разрядность"><DecimalText><span><BlueArrow />,0</span><span>,00</span></DecimalText></ToolButton>
                  <ToolButton $w={21} aria-label="Уменьшить разрядность"><DecimalText><span>,00</span><span><BlueArrow right />,0</span></DecimalText></ToolButton>
                </ButtonBox>
              </Row>
            </Stack>
          </RibbonGroup>

          <RibbonGroup title="Стили" w={248} pad="0 4px" gap={4}>
            <BigButton $w={105}><CondFmt /><span>Условное</span><BigLine>форматирование <Arrow /></BigLine></BigButton>
            <BigButton $w={86}><FmtTable /><span>Форматировать</span><BigLine>как таблицу <Arrow /></BigLine></BigButton>
            <BigButton $w={40}><CellStyles /><span>Стили</span><BigLine>ячеек <Arrow /></BigLine></BigButton>
          </RibbonGroup>

          <RibbonGroup title="Ячейки" w={92} pad="0 6px">
            <Stack $top={1}>
              <SmallButton><CellIns />Вставить <Arrow /></SmallButton>
              <SmallButton><CellDel />Удалить <Arrow /></SmallButton>
              <SmallButton><CellFmt />Формат <Arrow /></SmallButton>
            </Stack>
          </RibbonGroup>

          <RibbonGroup title="Редактирование" w={173} pad="0 4px 0 7px" gap={4}>
            <Stack $top={1}>
              <SmallButton aria-label="Сумма"><svg width="13" height="13" viewBox="0 0 13 13"><path d="M10 4V2.500H3l4 4-4 4h7V9" fill="none" stroke="#111" strokeWidth="1.600" /></svg><Arrow /></SmallButton>
              <SmallButton aria-label="Заполнить"><FillDown /><Arrow /></SmallButton>
              <SmallButton aria-label="Очистить"><Eraser /><Arrow /></SmallButton>
            </Stack>
            <BigButton $w={68}><SortLetters /><span>Сортировка</span><BigLine>и фильтр <Arrow /></BigLine></BigButton>
            <BigButton $w={60}><Binoculars /><span>Найти и</span><BigLine>выделить <Arrow /></BigLine></BigButton>
          </RibbonGroup>
        </Ribbon>

        <FormulaBar>
          <NameBox><input aria-label="Имя" defaultValue="C23" /><svg width="18" height="5" viewBox="0 0 18 5"><path d="M5 0h8L9 4.500z" fill="#111" /></svg></NameBox>
          <FxZone><Dimple /><FxButton>f<small>x</small></FxButton></FxZone>
          <FormulaInput aria-label="Строка формул" />
          <ExpandButton aria-label="Развернуть"><svg width="8" height="10" viewBox="0 0 8 10"><path d="M.5 1L4 4l3.500-3M.5 5.500L4 8.500l3.500-3" fill="none" stroke="#111" strokeWidth="1.500" /></svg></ExpandButton>
        </FormulaBar>

        <Work>
          <SheetView><Grid /></SheetView>
          <VScroll>
            <SplitHandle />
            <ScrollButton aria-label="Вверх"><Tri dir="up" c="#a9abad" /></ScrollButton>
            <VThumb><Grip vertical /></VThumb>
            <VTrack />
            <ScrollButton aria-label="Вниз"><Tri dir="down" c="#c0c2c4" /></ScrollButton>
          </VScroll>
        </Work>

        <SheetBar>
          <TabArea>
            <NavButtons>
              <PlainButton aria-label="Первый лист"><Tri dir="left" bar /></PlainButton>
              <PlainButton aria-label="Предыдущий лист"><Tri dir="left" /></PlainButton>
              <PlainButton aria-label="Следующий лист"><Tri dir="right" /></PlainButton>
              <PlainButton aria-label="Последний лист"><Tri dir="right" bar /></PlainButton>
            </NavButtons>
            {sheetTabs.map((t, i) => <SheetTab key={t} $w={i === 0 ? 54 : 61}><Slash />{t}</SheetTab>)}
            <SheetTab $w={61} $active>Лист19</SheetTab>
            <Slash end />
            <PlainButton aria-label="Вставить лист"><NewSheet /></PlainButton>
            <SplitHandle $vertical />
          </TabArea>
          <HScroll>
            <ScrollButton $w={18} $h={14} aria-label="Влево"><Tri dir="left" c="#b0b2b4" /></ScrollButton>
            <HThumb><Grip /></HThumb>
            <HTrack />
            <ScrollButton $w={18} $h={14} aria-label="Вправо"><Tri dir="right" c="#b0b2b4" /></ScrollButton>
            <SplitHandle $vertical />
          </HScroll>
          <BarCorner />
        </SheetBar>

        <StatusBar>
          <StatusText>Готово</StatusText>
          <Spacer />
          <ViewZone>
            <ViewButtons>
              <ViewButton $on aria-label="Обычный"><ViewIcon kind="grid" /></ViewButton>
              <ViewButton aria-label="Разметка страницы"><ViewIcon kind="page" /></ViewButton>
              <ViewButton aria-label="Страничный"><ViewIcon kind="break" /></ViewButton>
            </ViewButtons>
            <PlainButton aria-label="Уменьшить"><ZoomSign /></PlainButton>
            <Zoom type="range" aria-label="Масштаб" defaultValue={50} />
            <PlainButton aria-label="Увеличить"><ZoomSign plus /></PlainButton>
          </ViewZone>
        </StatusBar>

        <Taskbar>
          <StartButton><XpFlag />пуск</StartButton>
          <TaskMain>
            <Row $gap={1}>
              <TaskButton><Folder />информатика</TaskButton>
              <TaskButton><WordIcon />методичка вычисли...</TaskButton>
              <TaskButton $on><ExcelIcon />Microsoft Excel - вло...</TaskButton>
            </Row>
            <QuickLaunch>
              <PlainButton aria-label="Рабочий стол"><DesktopIcon /></PlainButton>
              <PlainButton aria-label="Internet Explorer"><IeIcon /></PlainButton>
              <PlainButton aria-label="Проигрыватель"><MediaIcon /></PlainButton>
              <PlainButton aria-label="Блокнот"><NotepadIcon /></PlainButton>
              <PlainButton aria-label="Заметка 1"><NoteIcon /></PlainButton>
              <PlainButton aria-label="Заметка 2"><NoteIcon /></PlainButton>
              <Links href="#links">Ссылки</Links>
              <PlainButton aria-label="Ещё"><svg width="9" height="16" viewBox="0 0 9 16"><path d="M1 1l3 2.500L1 6M5 1l3 2.500L5 6" fill="none" stroke="#8fc0f8" /></svg></PlainButton>
            </QuickLaunch>
          </TaskMain>
          <Tray>
            <TrayIcons><Shield /><NetIcon /><NetIcon /><Messenger /><Speaker /><Safely /></TrayIcons>
            <Clock><span>12:11</span><span>пятница</span><span>19.10.2012</span></Clock>
          </Tray>
        </Taskbar>
      </Window>
    </>
  );
}
